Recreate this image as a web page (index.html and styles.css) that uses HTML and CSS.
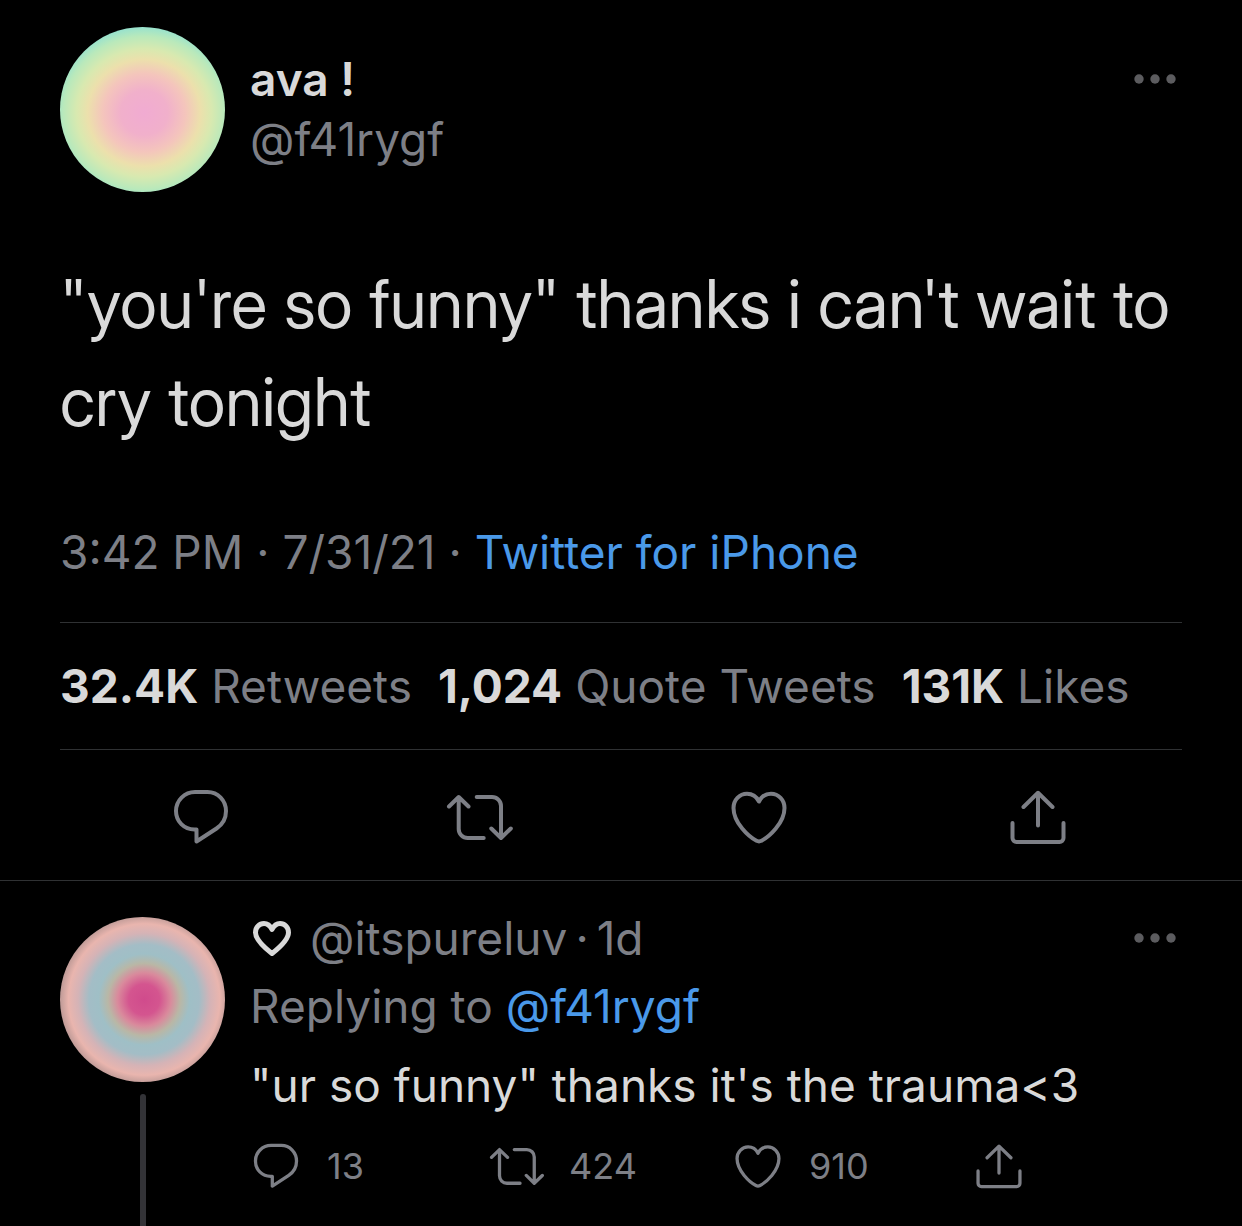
FILE: index.html
```html
<!DOCTYPE html>
<html lang="en">
<head>
<meta charset="utf-8">
<meta name="viewport" content="width=device-width, initial-scale=1">
<title>Tweet</title>
<link rel="stylesheet" href="styles.css">
</head>
<body>
<svg class="sprite" aria-hidden="true">
  <symbol id="icon-reply" viewBox="0 0 56 56">
    <path d="M22 3H34.500C45 3 53 11.500 53 22C53 29 49.500 35.500 43.500 39.500L23.500 52.500V40.500H21.500C11 40.500 3 32.500 3 22C3 11.500 11.500 3 22 3Z"/>
  </symbol>
  <symbol id="icon-retweet" viewBox="0 0 68 56">
    <path d="M3 17.500L12.700 8L22.500 17.500M12.700 8.500V40a9 9 0 0 0 9 9H37.700M30.700 8H46a9 9 0 0 1 9 9V48.500M45.300 39.500L55 49L64.800 39.500"/>
  </symbol>
  <symbol id="icon-heart" viewBox="0 0 56 56">
    <path d="M28 12.500C25.500 7.500 21 4.800 16 4.800C8.500 4.800 2.500 11 2.500 19C2.500 34 18 48 25.500 51.800Q28 53 30.500 51.800C38 48 53.500 34 53.500 19C53.500 11 47.500 4.800 40 4.800C35 4.800 30.500 7.500 28 12.500Z"/>
  </symbol>
  <symbol id="icon-share" viewBox="0 0 56 56">
    <path d="M28 4V36.500M13.500 18L28 3.800L42.500 18M2.500 34V49a4 4 0 0 0 4 4H49.500a4 4 0 0 0 4 -4V34"/>
  </symbol>
  <symbol id="icon-more" viewBox="0 0 42 10">
    <g fill="currentColor" stroke="none"><circle cx="5" cy="5" r="4.700"/><circle cx="21" cy="5" r="4.700"/><circle cx="37" cy="5" r="4.700"/></g>
  </symbol>
</svg>

<main class="thread">
  <article class="tweet">
    <header class="author">
      <div class="avatar avatar-pastel"></div>
      <div class="names">
        <span class="name">ava !</span>
        <span class="handle">@f41rygf</span>
      </div>
      <button class="more" type="button" aria-label="More"><svg><use href="#icon-more"/></svg></button>
    </header>
    <p class="tweet-text">"you're so funny" thanks i can't wait to cry tonight</p>
    <p class="meta">3:42 PM · 7/31/21 · <a href="#">Twitter for iPhone</a></p>
    <div class="stats">
      <span><strong>32.4K</strong> Retweets</span>
      <span><strong>1,024</strong> Quote Tweets</span>
      <span><strong>131K</strong> Likes</span>
    </div>
    <div class="actions">
      <button type="button" aria-label="Reply"><svg><use href="#icon-reply"/></svg></button>
      <button type="button" aria-label="Retweet"><svg class="wide"><use href="#icon-retweet"/></svg></button>
      <button type="button" aria-label="Like"><svg><use href="#icon-heart"/></svg></button>
      <button type="button" aria-label="Share"><svg><use href="#icon-share"/></svg></button>
    </div>
  </article>

  <article class="reply">
    <div class="rail">
      <div class="avatar avatar-rings"></div>
      <div class="connector"></div>
    </div>
    <div class="reply-body">
      <header class="reply-head">
        <svg class="name-heart" viewBox="0 0 40 38" role="img" aria-label="heart"><path d="M20 10.500C18 6.500 15 4.500 12 4.500C7.500 4.500 3.500 8 3.500 13.500C3.500 21 13 29 20 34.500C27 29 36.500 21 36.500 13.500C36.500 8 32.500 4.500 28 4.500C25 4.500 22 6.500 20 10.500Z"/></svg>
        <span class="byline"><span>@itspureluv</span><span>·</span><span>1d</span></span>
        <button class="more" type="button" aria-label="More"><svg><use href="#icon-more"/></svg></button>
      </header>
      <p class="replying">Replying to <a href="#">@f41rygf</a></p>
      <p class="reply-text">"ur so funny" thanks it's the trauma&lt;3</p>
      <div class="reply-actions">
        <button type="button" aria-label="Reply"><svg><use href="#icon-reply"/></svg>13</button>
        <button type="button" aria-label="Retweet"><svg class="wide"><use href="#icon-retweet"/></svg>424</button>
        <button type="button" aria-label="Like"><svg><use href="#icon-heart"/></svg>910</button>
        <button type="button" aria-label="Share"><svg><use href="#icon-share"/></svg></button>
      </div>
    </div>
  </article>
</main>
</body>
</html>
```

FILE: styles.css
```css
* {
  box-sizing: border-box;
}

body {
  margin: 0;
  background: #000;
  color: #d9d9d9;
  font-family: Inter, "Liberation Sans", sans-serif;
  font-size: 46px;
  line-height: 60px;
}

p {
  margin: 0;
}

a {
  color: #4a99e9;
  text-decoration: none;
}

button {
  padding: 0;
  border: 0;
  background: none;
  color: inherit;
  font: inherit;
  cursor: pointer;
}

svg {
  display: block;
  fill: none;
  stroke: currentColor;
  stroke-width: 4;
  stroke-linecap: round;
  stroke-linejoin: round;
}

.sprite {
  display: none;
}

.thread {
  display: flex;
  flex-direction: column;
  min-height: 100vh;
}

.tweet {
  padding: 27px 60px 0;
  border-bottom: 1px solid #2f3133;
}

.author {
  display: flex;
  gap: 25px;
}

.avatar {
  flex: none;
  width: 165px;
  height: 165px;
  border-radius: 50%;
}

.avatar-pastel {
  background: radial-gradient(ellipse 94px 89px at 51% 52%, #f1abd2 0%, #f1b0cb 25%, #f4c5bc 44%, #ece0ac 60%, #d8e9b0 72%, #b9e9bb 86%, #8fe0d2 99%);
}

.avatar-rings {
  background: radial-gradient(circle 86px at 51% 50%, #d04b8c 0%, #d4558f 18%, #d98a9c 31%, #b9b7a6 42%, #9fbfc6 53%, #a3bdc6 64%, #d5b3b6 77%, #e9b5ae 88%, #b99794 99%);
}

.names {
  display: flex;
  flex: 1;
  flex-direction: column;
  padding-top: 22px;
}

.name {
  font-weight: 600;
}

.handle,
.meta,
.stats,
.actions,
.reply-head,
.replying,
.reply-actions {
  color: #7d7f86;
}

.more {
  align-self: flex-start;
  margin: 47px 6px 0 0;
  color: #5c5c5f;
}

.more svg {
  width: 42px;
  height: 10px;
}

.tweet-text {
  margin-top: 63px;
  font-family: "Inter Display", Inter, "Liberation Sans", sans-serif;
  font-size: 67px;
  font-weight: 400;
  line-height: 98px;
}

.meta {
  margin-top: 71px;
  padding-bottom: 40px;
  border-bottom: 1px solid #2f3133;
}

.stats {
  display: flex;
  flex-wrap: wrap;
  gap: 0 26px;
  padding: 33px 0;
  border-bottom: 1px solid #2f3133;
}

.stats strong {
  color: #d9d9d9;
  font-weight: 700;
}

.actions {
  display: grid;
  grid-template-columns: repeat(4, 1fr);
  justify-items: center;
  padding: 39px 5px 35px 1px;
}

.actions svg {
  width: 56px;
  height: 56px;
}

.actions .wide {
  width: 68px;
}

.reply {
  display: flex;
  flex: 1;
  gap: 25px;
  padding: 36px 60px 0;
}

.rail {
  display: flex;
  flex-direction: column;
  align-items: center;
  gap: 12px;
}

.connector {
  flex: 1;
  width: 6px;
  border-radius: 3px 3px 0 0;
  background: #333337;
}

.reply-body {
  flex: 1;
  padding-bottom: 36px;
}

.reply-head {
  display: flex;
  align-items: center;
  gap: 18px;
  height: 42px;
}

.byline {
  display: flex;
  gap: 8px;
}

.reply-head .name-heart {
  width: 40px;
  height: 38px;
  margin-left: 2px;
  color: #d9d9d9;
  stroke-width: 5;
}

.reply-head .more {
  align-self: center;
  margin-top: 0;
  margin-left: auto;
}

.replying {
  margin-top: 17px;
}

.reply-text {
  margin-top: 19px;
}

.reply-actions {
  display: grid;
  grid-template-columns: 236fr 246fr 241fr 206fr;
  margin-top: 28px;
  padding-left: 3px;
  font-size: 36px;
  line-height: 46px;
}

.reply-actions button {
  display: flex;
  align-items: center;
  gap: 28px;
}

.reply-actions svg {
  width: 46px;
  height: 46px;
}

.reply-actions .wide {
  width: 56px;
  margin-right: -4px;
}
```
